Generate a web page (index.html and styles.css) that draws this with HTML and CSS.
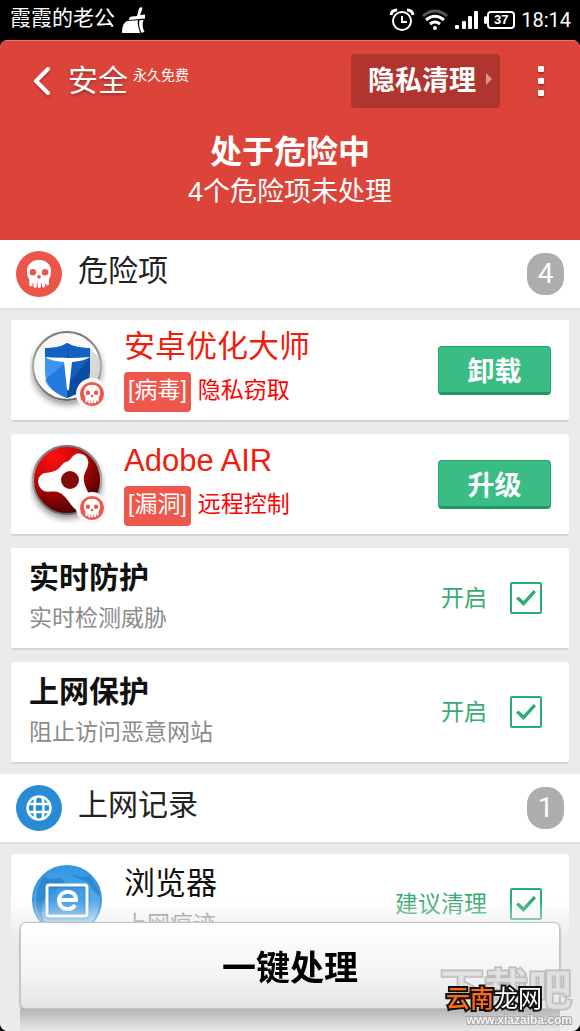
FILE: index.html
```html
<!DOCTYPE html>
<html lang="zh-CN">
<head>
<meta charset="utf-8">
<meta name="viewport" content="width=device-width, initial-scale=1">
<title>安全</title>
<link rel="stylesheet" href="styles.css">
</head>
<body>
<svg class="defs" aria-hidden="true">
  <defs>
    <symbol id="skull" viewBox="0 0 28 32">
      <path fill="#fff" d="M14 1C6 1 1 6 1 13c0 4 .8 6.500 2.500 8.500V28c0 1.600 3.500 1.600 3.500 0v-2h1v3.500c0 2 3.600 2 3.600 0V26h1v3.500c0 2 3.600 2 3.600 0V26h1v3c0 2 3.500 2 3.500 0v-2.500h1V27c0 1.500 3 1.500 3 0v-5.500C26.200 19 27 17 27 13 27 6 22 1 14 1z"/>
      <g fill="#ec554a"><circle cx="7.500" cy="14" r="3.500"/><circle cx="20.500" cy="14" r="3.500"/><circle cx="14" cy="19" r="2"/></g>
    </symbol>
    <symbol id="danger-badge" viewBox="0 0 32 32">
      <circle cx="16" cy="16" r="16" fill="#f7f7f7"/>
      <circle cx="16" cy="16" r="12" fill="#f2665a"/>
      <circle cx="16" cy="16" r="11" fill="#ec554a"/>
      <use href="#skull" x="7" y="6" width="18" height="20"/>
    </symbol>
    <linearGradient id="ring" x2="0" y2="1"><stop stop-color="#777"/><stop offset=".5" stop-color="#aaa"/><stop offset="1" stop-color="#666"/></linearGradient>
    <linearGradient id="paper" x2="1" y2="1"><stop stop-color="#f3f3f3"/><stop offset=".6" stop-color="#fff"/><stop offset="1" stop-color="#ddd"/></linearGradient>
    <radialGradient id="ruby" cx=".3" cy=".15" r=".9"><stop stop-color="#ff1010"/><stop offset=".45" stop-color="#c00808"/><stop offset="1" stop-color="#450000"/></radialGradient>
    <linearGradient id="sky" x2="0" y2="1"><stop stop-color="#3097e3"/><stop offset=".6" stop-color="#5aaeea"/><stop offset="1" stop-color="#b5ddf8"/></linearGradient>
    <filter id="drop" x="-20%" y="-20%" width="140%" height="150%"><feDropShadow dx="0" dy="4" stdDeviation="3" flood-opacity=".4"/></filter>
  </defs>
</svg>

<div class="status">
  <span class="carrier">霞霞的老公</span>
  <svg class="broom" width="25" height="26" viewBox="0 0 25 26" fill="#fff"><path d="M18 1.500C19-.5 22 0 21.200 2.500L19 8l5-.500v4L8 13c-.5-2 1-3.500 3-3.500l5-.4z"/><path d="M6 14l11-.7c-1 4 1 8 2 12.700H1c0-6 1.500-10 5-12z"/><path d="M18.500 13.300l4-.3c-1.500 4-1 8 1 12l-3 .8c-2-4-3-8-2-12.500z"/></svg>
  <span class="grow"></span>
  <svg width="26" height="24" viewBox="0 0 26 24" fill="none" stroke="#fff" stroke-width="2"><circle cx="13" cy="13" r="9"/><path d="M13 8v6h5"/><path stroke-width="3" d="M2 7c.5-3 3-5 6-5M24 7c-.5-3-3-5-6-5"/></svg>
  <svg width="28" height="24" viewBox="0 0 28 24" fill="none" stroke="#fff" stroke-width="3"><path stroke="#555" d="M2 8Q14-2 26 8"/><path d="M5 12q9-7.500 18 0M9 16q5-4 10 0"/><circle cx="14" cy="20" r="2" fill="#fff" stroke="none"/></svg>
  <svg width="24" height="24" viewBox="0 0 24 24" fill="#fff"><rect y="17" width="4" height="4" rx="1"/><rect x="7" y="13" width="4" height="8" rx="1"/><rect x="13" y="8" width="4" height="13" rx="1"/><rect x="19" y="3" width="4" height="18" rx="1"/></svg>
  <span class="battery">37</span>
  <time class="clock">18:14</time>
</div>

<div class="app">
  <header class="hero">
    <div class="bar">
      <button class="back" aria-label="返回"><svg width="20" height="30" viewBox="0 0 20 30" fill="none" stroke="#fff" stroke-width="4" stroke-linecap="round" stroke-linejoin="round"><path d="M16 3 4 15l12 12"/></svg></button>
      <h1 class="brand">安全</h1>
      <span class="free">永久免费</span>
      <span class="grow"></span>
      <button class="privacy">隐私清理<span class="tri"></span></button>
      <button class="more" aria-label="更多"><span></span><span></span><span></span></button>
    </div>
    <div class="summary">
      <strong>处于危险中</strong>
      <p>4个危险项未处理</p>
    </div>
  </header>

  <main>
    <section>
      <div class="heading">
        <span class="disc disc-red"><svg width="26" height="30"><use href="#skull"/></svg></span>
        <h2>危险项</h2>
        <span class="count">4</span>
      </div>
      <div class="cards">
        <article class="card">
          <svg class="logo" width="76" height="84" viewBox="0 0 76 84">
            <circle cx="37" cy="38" r="35" fill="#ddd" filter="url(#drop)"/>
            <circle cx="37" cy="38" r="34" fill="url(#paper)" stroke="url(#ring)" stroke-width="2"/>
            <path fill="#ccc" opacity=".7" d="M60 20l9 10c4 16-4 30-15 37L38 68z"/>
            <path fill="#3d94f5" d="M15 20c9 0 16-1 22-5v55C25 66 15 57 15 44z"/>
            <path fill="#0a4da0" d="M60 20c-9 0-16-1-23-5v55c13-4 23-13 23-26z"/>
            <path fill="#1262c5" d="M15 20c9 0 16-1 22-5l1 14-23 1zM60 20c-9 0-16-1-23-5v14l23 1z"/>
            <path fill="#166bd0" d="M60 30L41 52l-3-19zM15 52l20-17 2 35C26 66 17 59 15 52z" opacity=".65"/>
            <path fill="#fff" d="M15 29q22 2 45 0-5 4-18 5l-3 27q-1 3-2 0l-3-27q-14-1-19-5z"/>
            <use href="#danger-badge" x="46" y="50" width="32" height="32"/>
          </svg>
          <div class="info"><h3 class="alert">安卓优化大师</h3><p class="threat"><span class="tag">[病毒]</span><span class="kind">隐私窃取</span></p></div>
          <button class="action">卸载</button>
        </article>
        <article class="card">
          <svg class="logo" width="76" height="84" viewBox="0 0 76 84">
            <circle cx="37" cy="38" r="35" fill="#999" filter="url(#drop)"/>
            <circle cx="37" cy="38" r="34" fill="url(#ruby)" stroke="url(#ring)" stroke-width="2"/>
            <path fill="#fff" d="M36 20c5-1 5-6 10-8 7-2 14 4 12 11-1 5-5 9-4 16 1 8 7 13 6 22-1 8-10 11-16 5-5-5-8-12-14-15-5-3-12 0-16-2-8-4-8-16 1-18 6-1 9-1 13-4 3-2 4-6 8-7z"/>
            <circle cx="40" cy="38" r="9" fill="#850909"/>
            <use href="#danger-badge" x="46" y="50" width="32" height="32"/>
          </svg>
          <div class="info"><h3 class="alert">Adobe AIR</h3><p class="threat"><span class="tag">[漏洞]</span><span class="kind">远程控制</span></p></div>
          <button class="action">升级</button>
        </article>
        <article class="card">
          <div class="info"><h3 class="strong">实时防护</h3><p class="note">实时检测威胁</p></div>
          <label class="pick"><span>开启</span><input type="checkbox" checked></label>
        </article>
        <article class="card">
          <div class="info"><h3 class="strong">上网保护</h3><p class="note">阻止访问恶意网站</p></div>
          <label class="pick"><span>开启</span><input type="checkbox" checked></label>
        </article>
      </div>
    </section>
    <section>
      <div class="heading">
        <span class="disc disc-blue"><svg width="26" height="26" viewBox="0 0 26 26" fill="none" stroke="#fff" stroke-width="2.500"><circle cx="13" cy="13" r="11.500"/><path d="M2 9h22M2 17h22M9.500 2q-2 11 0 22M16.500 2q2 11 0 22"/></svg></span>
        <h2>上网记录</h2>
        <span class="count">1</span>
      </div>
      <div class="cards">
        <article class="card">
          <svg class="logo" width="76" height="84" viewBox="0 0 76 84">
            <circle cx="37" cy="38" r="34" fill="url(#sky)" stroke="#3a94dc" stroke-width="2"/>
            <path fill="#1d78c5" opacity=".6" d="M8 25l5-10 8 2 9-1 6 5-8 2-2 8-12 6-2 14 3 12C6 55 4 38 8 25zM42 13l10 2 7-1c6 6 10 13 11 21l-7-7-5-8-9-3z"/>
            <rect x="17" y="24" width="40" height="31" rx="2" fill="#3b99e4" fill-opacity=".6" stroke="#1d69a7" stroke-width="5" stroke-opacity=".35"/>
            <rect x="17" y="23" width="40" height="31" rx="2" fill="none" stroke="#fff" stroke-width="3"/>
            <path d="M29 38h17c0-11-16-11-17 0 0 11 13 11 16 5" fill="none" stroke="#fff" stroke-width="4"/>
          </svg>
          <div class="info"><h3>浏览器</h3><p class="note">上网痕迹</p></div>
          <label class="pick"><span>建议清理</span><input type="checkbox" checked></label>
        </article>
      </div>
    </section>
  </main>
</div>

<footer class="dock">
  <button class="fix-all">一键处理</button>
  <div class="mark">
    <span class="mark-name">下载吧</span>
    <span class="mark-url">www.xiazaiba.com</span>
    <span class="mark-site"><b>云南</b>龙网</span>
  </div>
</footer>
</body>
</html>
```
FILE: styles.css
```css
* { box-sizing: border-box; }

body {
  margin: 0;
  display: flex;
  flex-direction: column;
  min-height: 100vh;
  background: #000;
  color: #222;
  font-family: "Liberation Sans", "Noto Sans CJK SC", sans-serif;
}

h1, h2, h3, p { margin: 0; font-weight: 400; }
button { border: 0; padding: 0; font: inherit; color: inherit; background: none; cursor: pointer; }
svg { flex: none; display: block; }
.defs { position: absolute; width: 0; height: 0; }
.grow { flex: 1; }

.status {
  display: flex;
  align-items: center;
  gap: 6px;
  height: 40px;
  padding: 0 9px 0 10px;
  color: #fff;
}
.carrier { font-size: 21px; line-height: 36px; padding-bottom: 4px; white-space: nowrap; }
.battery {
  position: relative;
  width: 28px;
  margin-left: 2px;
  border: 2px solid #fff;
  border-radius: 4px;
  font-size: 13px;
  font-weight: 700;
  line-height: 14px;
  text-align: center;
}
.battery::before {
  content: "";
  position: absolute;
  left: -5px;
  top: 3px;
  width: 3px;
  height: 8px;
  border-radius: 2px;
  background: #fff;
}
.clock { font: 400 20px/24px Roboto, sans-serif; }

.app {
  flex: 1;
  display: flex;
  flex-direction: column;
  overflow: hidden;
  border-radius: 8px;
  background: #ebebeb;
}

.hero { background: #dc443a; color: #fff; border-top: 1px solid #ec7368; }
.bar { display: flex; align-items: center; height: 79px; padding: 0 32px 0 30px; }
.back { padding: 2px; filter: drop-shadow(0 2px 1px rgba(0, 0, 0, .25)); }
.brand { margin-left: 14px; font-size: 30px; line-height: 40px; text-shadow: 0 2px 3px rgba(0, 0, 0, .3); white-space: nowrap; }
.free { margin-left: 5px; padding-bottom: 12px; font-size: 14px; line-height: 20px; white-space: nowrap; }
.privacy {
  display: flex;
  align-items: center;
  gap: 10px;
  height: 54px;
  padding: 0 8px 4px 17px;
  border-radius: 4px;
  background: #b0352e;
  font-size: 27px;
  font-weight: 700;
  white-space: nowrap;
}
.tri { border: solid transparent; border-width: 6px 0 6px 6px; border-left-color: #d99490; }
.more { display: flex; flex-direction: column; gap: 6px; margin-left: 34px; padding: 4px; }
.more span { width: 6px; height: 6px; border-radius: 1px; background: #fff; box-shadow: 0 2px 2px rgba(0, 0, 0, .3); }

.summary { padding: 12px 0 28px; text-align: center; line-height: 40px; }
.summary strong { display: block; font-size: 32px; }
.summary p { font-size: 27px; }

.heading {
  display: flex;
  align-items: center;
  height: 70px;
  padding: 0 16px;
  border-bottom: 2px solid #e0e0e0;
  background: #fff;
}
.disc { display: grid; place-items: center; width: 46px; height: 46px; border-radius: 50%; }
.disc-red { background: #ec554a; }
.disc-blue { background: #2a8bd5; }
.heading h2 { flex: 1; margin-left: 16px; padding-bottom: 6px; font-size: 30px; line-height: 36px; }
.count {
  width: 37px;
  border-radius: 17px;
  background: #adadad;
  color: #fff;
  font: 400 28px/42px Roboto, sans-serif;
  text-align: center;
}

.cards { display: flex; flex-direction: column; gap: 12px; padding: 10px 11px; }
.card {
  display: flex;
  align-items: center;
  gap: 18px;
  min-height: 102px;
  padding: 0 18px;
  border-bottom: 2px solid #d4d4d4;
  border-radius: 3px;
  background: #fff;
}
.logo { margin: 8px 0 8px 1px; }
.info { flex: 1; }
.card h3 { font-size: 31px; line-height: 36px; color: #111; white-space: nowrap; }
.card h3.strong { font-size: 30px; font-weight: 700; }
.card h3.alert { color: #f01c0c; }
.threat { display: flex; margin-top: 7px; color: #f00; font-size: 23px; line-height: 36px; white-space: nowrap; }
.tag { margin-right: 7px; padding: 0 4px 4px; border-radius: 4px; background: #ee574b; color: #fff; }
.note { margin-top: 4px; padding-bottom: 1px; color: #8b8b8b; font-size: 23px; line-height: 36px; white-space: nowrap; }
.action {
  width: 113px;
  height: 49px;
  border: 1px solid #25a56e;
  border-bottom: 3px solid #249663;
  border-radius: 4px;
  background: #39bd84;
  color: #fff;
  font-size: 27px;
  font-weight: 700;
}
.pick { display: flex; align-items: center; gap: 23px; margin-right: 9px; color: #3aab70; font-size: 23px; white-space: nowrap; }
.pick span { padding-bottom: 4px; }
.pick input {
  appearance: none;
  display: grid;
  place-items: center;
  width: 32px;
  height: 32px;
  margin: 0;
  border: 2px solid #27ae70;
  border-radius: 2px;
  background: #fff;
}
.pick input:checked::before {
  content: "";
  width: 20px;
  height: 16px;
  background: #27ae70;
  clip-path: polygon(0 55%, 12% 40%, 38% 68%, 88% 0, 100% 14%, 38% 100%);
}

.dock {
  position: fixed;
  left: 0;
  right: 0;
  bottom: 0;
  padding: 22px 20px;
  border-radius: 0 0 8px 8px;
  background: linear-gradient(rgba(235, 235, 235, 0), #ebebeb 40px);
}
.dock::after {
  content: "";
  position: absolute;
  left: 20px;
  right: 20px;
  bottom: 0;
  height: 22px;
  background: linear-gradient(#b5b5b5, #e8e8e8);
}
.fix-all {
  position: relative;
  display: block;
  width: 100%;
  height: 87px;
  border: 1px solid #c4c4c4;
  border-radius: 6px;
  background: linear-gradient(#fff, #f4f4f4 60%, #e4e4e4);
  box-shadow: 0 1px 2px rgba(0, 0, 0, .5);
  color: #000;
  font-size: 34px;
  font-weight: 700;
}

.mark { position: absolute; right: 8px; bottom: 2px; z-index: 1; width: 132px; height: 64px; pointer-events: none; }
.mark span { position: absolute; white-space: nowrap; }
.mark-name { left: 0; top: 0; color: rgba(225, 225, 225, .8); font-size: 44px; line-height: 52px; font-weight: 700; -webkit-text-stroke: 3px #bcbcbc; paint-order: stroke fill; }
.mark-url { right: 0; bottom: 0; color: #f2f2f2; font: 700 12px/18px "Liberation Sans", sans-serif; -webkit-text-stroke: 2px #a8a8a8; paint-order: stroke fill; }
.mark-site { left: 6px; top: 18px; color: #fff; font-size: 24px; line-height: 32px; -webkit-text-stroke: 4px #111; paint-order: stroke fill; }
.mark-site b { color: #ff6a13; font-weight: 500; }
```
